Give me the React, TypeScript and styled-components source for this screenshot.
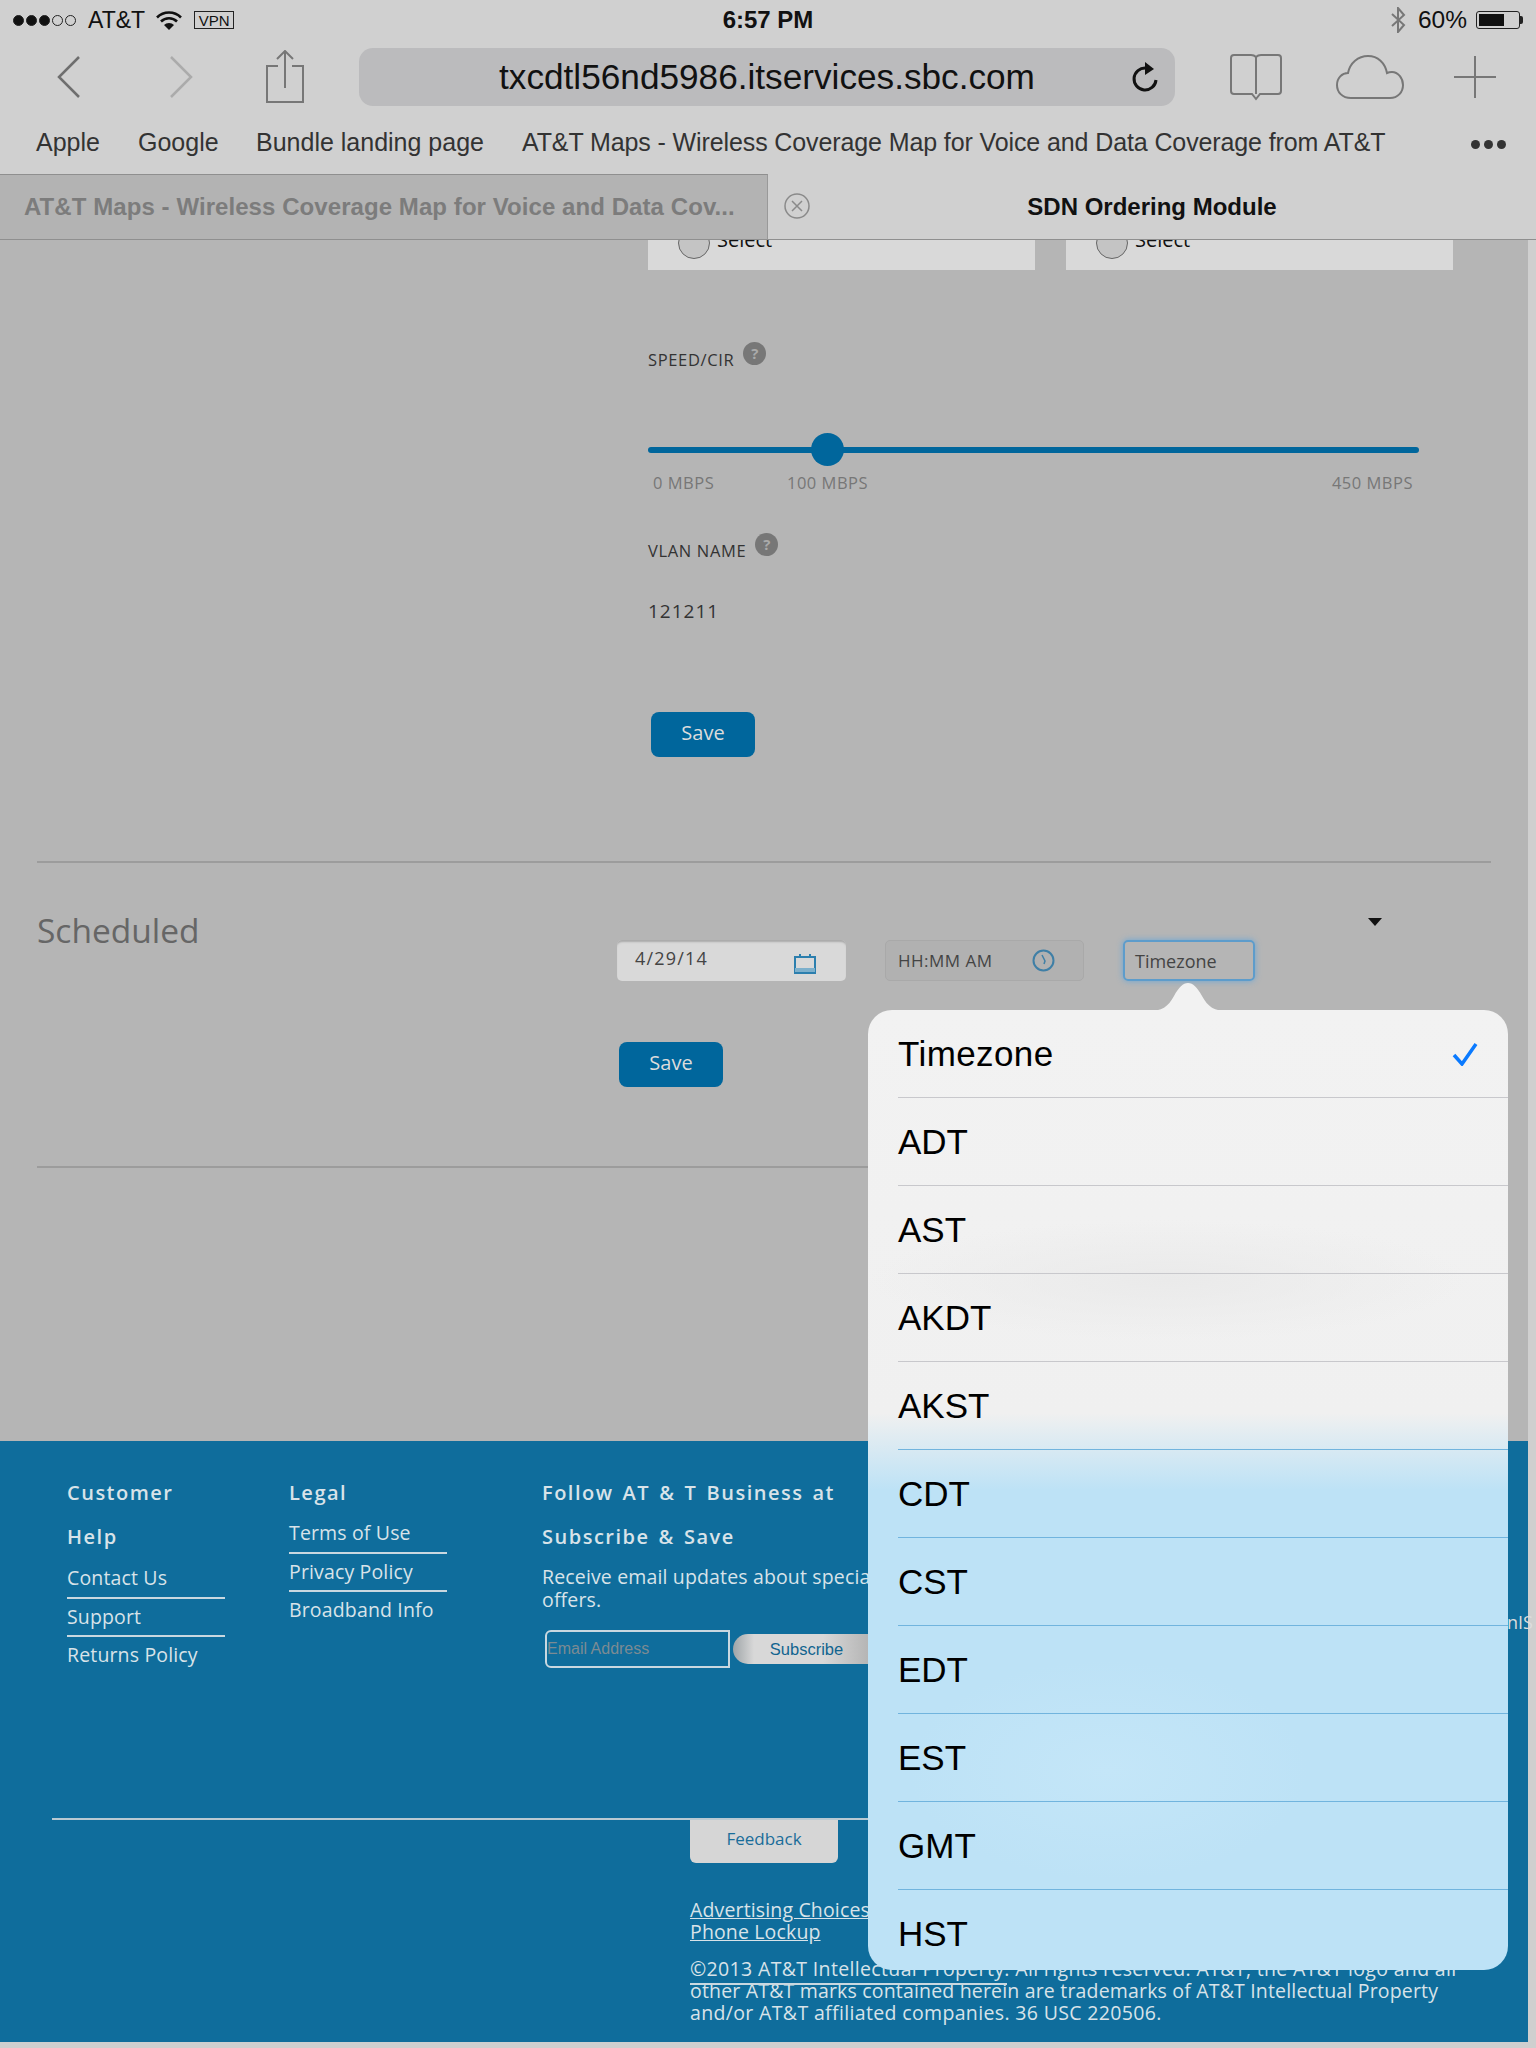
import styled, { createGlobalStyle } from 'styled-components';

const pageFont = `'Open Sans', 'Noto Sans', sans-serif`;
const iosFont = `'Liberation Sans', Arial, sans-serif`;

const GlobalStyle = createGlobalStyle`
    html, body {
        margin: 0;
        padding: 0;
        background: #cfcfcf;
        overflow: hidden;
    }
    * {
        box-sizing: border-box;
    }
`;

const Page = styled.div`
    position: relative;
    width: 1536px;
    height: 2048px;
    overflow: hidden;
    font-family: ${pageFont};
`;

/* browser chrome */
const Chrome = styled.div`
    height: 240px;
    background: #d0d0d0;
    font-family: ${iosFont};
`;

const StatusBar = styled.div`
    position: relative;
    display: flex;
    align-items: center;
    height: 40px;
    padding: 0 16px 0 13px;
    font-size: 23px;
    color: #111;
`;

const Dots = styled.div`
    display: flex;
    gap: 2px;
    width: 75px;
`;

const Dot = styled.span<{ $filled?: boolean }>`
    width: 11px;
    height: 11px;
    border-radius: 50%;
    border: 1px solid #222;
    background: ${(p) => (p.$filled ? '#111' : 'transparent')};
`;

const Vpn = styled.span`
    margin-left: 11px;
    width: 40px;
    height: 18px;
    border: 1px solid #222;
    font-size: 15px;
    line-height: 17px;
    text-align: center;
`;

const Clock = styled.div`
    position: absolute;
    left: 0;
    right: 0;
    text-align: center;
    font-size: 24px;
    font-weight: bold;
    color: #111;
`;

const StatusRight = styled.div`
    display: flex;
    align-items: center;
    margin-left: auto;
    gap: 12px;
`;

const Percent = styled.span`
    font-size: 24.5px;
`;

const Battery = styled.div`
    position: relative;
    width: 44px;
    height: 18px;
    margin-left: -3px;
    border: 1px solid #222;
    border-radius: 3px;
    padding: 2px;
    &::before {
        content: '';
        display: block;
        width: 25px;
        height: 100%;
        background: #111;
    }
    &::after {
        content: '';
        position: absolute;
        right: -4px;
        top: 4px;
        width: 3px;
        height: 8px;
        background: #222;
        border-radius: 0 2px 2px 0;
    }
`;

const Toolbar = styled.div`
    display: flex;
    align-items: center;
    height: 58px;
    margin-top: 8px;
`;

const ToolIcon = styled.svg<{ $left: number }>`
    flex: none;
    margin-left: ${(p) => p.$left}px;
    fill: none;
`;

const UrlBar = styled.div`
    position: relative;
    display: flex;
    align-items: center;
    justify-content: center;
    width: 816px;
    height: 58px;
    margin-left: 54px;
    border-radius: 14px;
    background: #bbbbbd;
    font-size: 35.2px;
    color: #111;
`;

const Reload = styled.svg`
    position: absolute;
    right: 14px;
    top: 13px;
`;

const Bookmarks = styled.div`
    display: flex;
    align-items: center;
    height: 68px;
    padding: 4px 30px 0 36px;
    font-size: 25px;
    color: #333;
`;

const Bookmark = styled.span<{ $width: number }>`
    width: ${(p) => p.$width}px;
    flex: none;
    white-space: nowrap;
    &:nth-child(4) {
        letter-spacing: -0.11px;
    }
`;

const MoreDots = styled.div`
    display: flex;
    gap: 4px;
    margin-left: auto;
    margin-top: 4px;
    span {
        width: 9px;
        height: 9px;
        border-radius: 50%;
        background: #333;
    }
`;

const Tabs = styled.div`
    display: flex;
    height: 66px;
`;

const InactiveTab = styled.div`
    width: 768px;
    display: flex;
    align-items: center;
    padding-left: 24px;
    background: #b3b3b3;
    border-top: 1px solid #8f8f8f;
    border-bottom: 1px solid #8f8f8f;
    border-right: 1px solid #999;
    font-size: 24px;
    font-weight: bold;
    letter-spacing: 0.07px;
    color: #7c7c7c;
    white-space: nowrap;
`;

const ActiveTab = styled.div`
    position: relative;
    flex: 1;
    display: flex;
    align-items: center;
    justify-content: center;
    border-bottom: 1px solid #8f8f8f;
    font-size: 24px;
    font-weight: bold;
    color: #111;
`;

const TabClose = styled.svg`
    position: absolute;
    left: 16px;
    top: 19px;
`;

/* page content */
const Main = styled.div`
    width: 1528px;
    height: 1201px;
    background: #b5b5b5;
`;

const FormSection = styled.div`
    width: 771px;
    margin-left: 648px;
`;

const Cards = styled.div`
    display: flex;
    gap: 31px;
    width: 805px;
`;

const Card = styled.div`
    display: flex;
    width: 387px;
    height: 30px;
    padding-left: 30px;
    overflow: hidden;
    background: #d9d9d9;
`;

const Radio = styled.span`
    flex: none;
    width: 32px;
    height: 32px;
    margin-top: -13px;
    border-radius: 50%;
    border: 1px solid #666;
    background: #c4c4c4;
`;

const RadioLabel = styled.span`
    margin: -13px 0 0 7px;
    font-size: 20px;
    line-height: 26px;
    color: #111;
`;

const FieldLabel = styled.div<{ $top: number }>`
    display: flex;
    align-items: flex-start;
    gap: 9px;
    height: 28px;
    margin-top: ${(p) => p.$top}px;
    span:first-child {
        margin-top: 8px;
        font-size: 16.5px;
        line-height: 20px;
        letter-spacing: 0.65px;
        color: #333;
    }
`;

const Help = styled.span`
    width: 23px;
    height: 23px;
    border-radius: 50%;
    background: #777;
    color: #aaa;
    font-size: 15px;
    font-weight: bold;
    line-height: 23px;
    text-align: center;
`;

const Slider = styled.div`
    position: relative;
    display: flex;
    align-items: center;
    height: 33px;
    margin-top: 63px;
`;

const Track = styled.div`
    width: 100%;
    height: 6px;
    border-radius: 3px;
    background: #00669c;
`;

const Thumb = styled.div`
    position: absolute;
    left: 163px;
    top: 0;
    width: 33px;
    height: 33px;
    border-radius: 50%;
    background: #00669c;
`;

const Scale = styled.div`
    display: flex;
    margin-top: 7px;
    padding: 0 6px 0 5px;
    font-size: 16.5px;
    line-height: 20px;
    letter-spacing: 0.5px;
    color: #777;
`;

const ScaleItem = styled.span<{ $width?: number }>`
    width: ${(p) => (p.$width ? `${p.$width}px` : 'auto')};
    &:last-child {
        margin-left: auto;
    }
`;

const Value = styled.div`
    margin-top: 38px;
    font-size: 19px;
    line-height: 24px;
    letter-spacing: 1px;
    color: #333;
`;

const SaveButton = styled.button<{ $left: number; $top: number }>`
    display: block;
    width: 104px;
    height: 45px;
    margin: ${(p) => p.$top}px 0 0 ${(p) => p.$left}px;
    padding: 0 0 4px;
    border: none;
    border-radius: 8px;
    background: #00669c;
    color: #dcdcdc;
    font-family: ${pageFont};
    font-size: 20px;
`;

const Divider = styled.hr<{ $top: number }>`
    width: 1454px;
    height: 2px;
    margin: ${(p) => p.$top}px 0 0 37px;
    border: none;
    background: #9c9c9c;
`;

const Scheduled = styled.div`
    display: flex;
    padding-left: 37px;
`;

const ScheduledTitle = styled.h2`
    width: 580px;
    margin: 45px 0 0;
    font-size: 33.5px;
    font-weight: 400;
    line-height: 44px;
    color: #666;
`;

const ScheduleColumn = styled.div`
    padding-top: 55px;
`;

const NativeArrow = styled.div`
    width: 0;
    height: 0;
    margin-left: 751px;
    border-left: 7px solid transparent;
    border-right: 7px solid transparent;
    border-top: 8px solid #111;
`;

const Inputs = styled.div`
    display: flex;
    margin-top: 14px;
`;

const DateInput = styled.div`
    display: flex;
    justify-content: space-between;
    width: 229px;
    height: 41px;
    padding: 6px 30px 0 18px;
    border-radius: 5px;
    background: #d9d9d9;
    box-shadow: inset 0 3px 2px -1px #aaa;
    font-size: 18px;
    letter-spacing: 1.2px;
    color: #444;
`;

const TimeInput = styled.div`
    display: flex;
    justify-content: space-between;
    align-items: center;
    width: 199px;
    height: 41px;
    margin-left: 39px;
    padding: 0 28px 0 12px;
    border: 1px solid #a9a9a9;
    border-radius: 5px;
    background: #b1b1b1;
    font-size: 17px;
    letter-spacing: 0.5px;
    color: #444;
`;

const ZoneInput = styled.div`
    display: flex;
    align-items: center;
    width: 132px;
    height: 41px;
    margin-left: 39px;
    padding-left: 10px;
    border: 2px solid #5d9ccb;
    border-radius: 5px;
    box-shadow: 0 0 6px #6aa6d6;
    font-size: 18px;
    color: #444;
`;

/* footer */
const Footer = styled.footer`
    position: relative;
    width: 1528px;
    height: 601px;
    background: #0f6d9c;
    color: #d8e3e9;
`;

const FooterColumns = styled.div`
    display: flex;
    height: 377px;
    padding: 30px 0 0 67px;
`;

const FooterColumn = styled.div<{ $width: number }>`
    flex: none;
    width: ${(p) => p.$width}px;
`;

const FooterHeading = styled.h3`
    margin: 0;
    font-size: 20px;
    font-weight: 600;
    line-height: 44px;
    letter-spacing: 1.5px;
    word-spacing: 2.4px;
`;

const LinkList = styled.div<{ $top: number }>`
    width: 158px;
    margin-top: ${(p) => p.$top}px;
`;

const FooterLink = styled.div`
    height: 38.5px;
    font-size: 19.5px;
    line-height: 35px;
    letter-spacing: 0.15px;
    white-space: nowrap;
    border-bottom: 2px solid #c9d8e0;
    &:last-child {
        border-bottom: none;
    }
`;

const Receive = styled.p`
    width: 380px;
    margin: 6px 0 0;
    font-size: 19.5px;
    line-height: 23px;
    letter-spacing: 0.15px;
`;

const SubscribeRow = styled.div`
    display: flex;
    margin: 19px 0 0 3px;
`;

const EmailInput = styled.div`
    width: 185px;
    height: 38px;
    border: 2px solid #c9d8e0;
    border-radius: 6px 0 0 6px;
    font-family: ${iosFont};
    font-size: 16px;
    line-height: 34px;
    color: #7c8b93;
`;

const SubscribeButton = styled.button`
    width: 150px;
    height: 30px;
    margin: 4px 0 0 3px;
    padding: 0 3px 0 0;
    border: none;
    border-radius: 15px;
    background: linear-gradient(90deg, #9fa5a8, #d8d8d8 14%, #d8d8d8 60%, #aaa);
    font-family: ${iosFont};
    font-size: 16.5px;
    color: #11648f;
`;

const FooterRule = styled.hr`
    width: 1400px;
    height: 2px;
    margin: 0 0 0 52px;
    border: none;
    background: #b9c9d2;
`;

const FooterBottom = styled.div`
    position: relative;
    margin-left: 690px;
`;

const Feedback = styled.div`
    width: 148px;
    height: 43px;
    border-radius: 0 0 6px 6px;
    background: #d6d6d6;
    color: #1a6d9a;
    font-size: 17px;
    line-height: 38px;
    text-align: center;
`;

const LegalLinks = styled.div`
    margin-top: 36px;
    font-size: 19.5px;
    line-height: 22px;
    letter-spacing: 0.15px;
    text-decoration: underline;
`;

const Copyright = styled.p`
    position: relative;
    margin: 15px 0 0;
    font-size: 19.5px;
    line-height: 22px;
    letter-spacing: 0.35px;
    white-space: nowrap;
`;

const TightLine = styled.span`
    letter-spacing: 0.18px;
`;

const StrayLine = styled.span`
    position: absolute;
    left: 0;
    top: 25px;
    width: 317px;
    height: 2px;
    background: #c9d8e0;
`;

const StrayText = styled.span`
    position: absolute;
    left: 1507px;
    top: 167px;
    font-size: 18px;
    line-height: 28px;
    color: #ddd;
    z-index: 3;
`;

/* timezone popover */
const Popover = styled.div`
    position: absolute;
    left: 868px;
    top: 1010px;
    width: 640px;
    height: 960px;
    z-index: 2;
    font-family: ${iosFont};
`;

const PopoverArrow = styled.svg`
    position: absolute;
    left: 280px;
    top: -27px;
`;

const PopoverPanel = styled.div`
    height: 100%;
    overflow: hidden;
    border-radius: 24px;
    background:
        radial-gradient(ellipse 200px 110px at 240px 760px, #c4e6f8, transparent),
        radial-gradient(ellipse 300px 60px at 300px 270px, #eaeaea, transparent),
        linear-gradient(#f2f2f2 0%, #f0f0f0 42%, #bde2f6 50%, #bde2f6 100%);
`;

const ZoneRow = styled.div<{ $tinted?: boolean }>`
    display: flex;
    align-items: center;
    justify-content: space-between;
    height: 88px;
    margin-left: 30px;
    padding-right: 30px;
    border-bottom: 1px solid ${(p) => (p.$tinted ? '#71b4de' : '#c8c8cc')};
    font-size: 35px;
    color: #000;
`;

const ZoneName = styled.span<{ $wide?: boolean }>`
    letter-spacing: ${(p) => (p.$wide ? '0.4px' : '0')};
`;

const zones = ['ADT', 'AST', 'AKDT', 'AKST', 'CDT', 'CST', 'EDT', 'EST', 'GMT', 'HST'];
const blueFrom = 4;

function App() {
    return (
        <Page>
            <GlobalStyle />
            <Chrome>
                <StatusBar>
                    <Dots>
                        <Dot $filled />
                        <Dot $filled />
                        <Dot $filled />
                        <Dot />
                        <Dot />
                    </Dots>
                    <span>AT&amp;T</span>
                    <svg width="28" height="20" viewBox="0 0 28 20" style={{ marginLeft: 10 }}>
                        <path d="M2 7.5a17 17 0 0 1 24 0" fill="none" stroke="#111" strokeWidth="2.6" />
                        <path d="M6 11.5a11.5 11.5 0 0 1 16 0" fill="none" stroke="#111" strokeWidth="2.6" />
                        <path d="M14 20l-5-5a7 7 0 0 1 10 0z" fill="#111" />
                    </svg>
                    <Vpn>VPN</Vpn>
                    <Clock>6:57 PM</Clock>
                    <StatusRight>
                        <svg width="16" height="26" viewBox="0 0 16 26" fill="none" stroke="#777" strokeWidth="2">
                            <path d="M2 7l12 11-6 7V1l6 7L2 19" />
                        </svg>
                        <Percent>60%</Percent>
                        <Battery />
                    </StatusRight>
                </StatusBar>
                <Toolbar>
                    <ToolIcon $left={57} width="24" height="42" viewBox="0 0 24 42" stroke="#6e6e6e" strokeWidth="2.5">
                        <path d="M22 1L2 21l20 20" />
                    </ToolIcon>
                    <ToolIcon $left={88} width="24" height="42" viewBox="0 0 24 42" stroke="#ababab" strokeWidth="2.5">
                        <path d="M2 1l20 20L2 41" />
                    </ToolIcon>
                    <ToolIcon $left={72} width="40" height="54" viewBox="0 0 40 54" stroke="#777" strokeWidth="2">
                        <path d="M13 16H2v36h36V16H27M20 38V2M12 9l8-8 8 8" />
                    </ToolIcon>
                    <UrlBar>
                        txcdtl56nd5986.itservices.sbc.com
                        <Reload width="32" height="34" viewBox="0 0 32 34" fill="none">
                            <path d="M17 7A11 11 0 1 0 27 19" stroke="#111" strokeWidth="3" />
                            <path d="M16 1l9 7-9 6z" fill="#111" />
                        </Reload>
                    </UrlBar>
                    <ToolIcon $left={55} width="52" height="48" viewBox="0 0 52 48" stroke="#777" strokeWidth="2">
                        <path d="M26 4c-1-1-3-2-5-2H4a3 3 0 0 0-3 3v33a3 3 0 0 0 3 3h18l4 5 4-5h18a3 3 0 0 0 3-3V5a3 3 0 0 0-3-3H31c-2 0-4 1-5 2v37" />
                    </ToolIcon>
                    <ToolIcon $left={54} width="68" height="44" viewBox="0 0 68 44" stroke="#777" strokeWidth="2">
                        <path d="M15 43C6 43 1 37 1 30c0-7 5-12 11-12 2-10 10-17 20-17 10 0 17 7 19 17 2-1 3-1 5-1 6 0 11 6 11 13 0 7-5 13-13 13z" />
                    </ToolIcon>
                    <ToolIcon $left={49} width="44" height="44" viewBox="0 0 44 44" stroke="#777" strokeWidth="2">
                        <path d="M22 1v42M1 22h42" />
                    </ToolIcon>
                </Toolbar>
                <Bookmarks>
                    <Bookmark $width={102}>Apple</Bookmark>
                    <Bookmark $width={118}>Google</Bookmark>
                    <Bookmark $width={266}>Bundle landing page</Bookmark>
                    <Bookmark $width={860}>AT&amp;T Maps - Wireless Coverage Map for Voice and Data Coverage from AT&amp;T</Bookmark>
                    <MoreDots>
                        <span />
                        <span />
                        <span />
                    </MoreDots>
                </Bookmarks>
                <Tabs>
                    <InactiveTab>AT&amp;T Maps - Wireless Coverage Map for Voice and Data Cov...</InactiveTab>
                    <ActiveTab>
                        <TabClose width="26" height="26" viewBox="0 0 26 26" fill="none" stroke="#8a8a8a" strokeWidth="1.5">
                            <circle cx="13" cy="13" r="12" />
                            <path d="M8 8l10 10M18 8L8 18" />
                        </TabClose>
                        SDN Ordering Module
                    </ActiveTab>
                </Tabs>
            </Chrome>
            <Main>
                <FormSection>
                    <Cards>
                        <Card>
                            <Radio />
                            <RadioLabel>Select</RadioLabel>
                        </Card>
                        <Card>
                            <Radio />
                            <RadioLabel>Select</RadioLabel>
                        </Card>
                    </Cards>
                    <FieldLabel $top={72}>
                        <span>SPEED/CIR</span>
                        <Help>?</Help>
                    </FieldLabel>
                    <Slider>
                        <Track />
                        <Thumb />
                    </Slider>
                    <Scale>
                        <ScaleItem $width={134}>0 MBPS</ScaleItem>
                        <ScaleItem>100 MBPS</ScaleItem>
                        <ScaleItem>450 MBPS</ScaleItem>
                    </Scale>
                    <FieldLabel $top={40}>
                        <span>VLAN NAME</span>
                        <Help>?</Help>
                    </FieldLabel>
                    <Value>121211</Value>
                    <SaveButton $left={3} $top={89}>Save</SaveButton>
                </FormSection>
                <Divider $top={104} />
                <Scheduled>
                    <ScheduledTitle>Scheduled</ScheduledTitle>
                    <ScheduleColumn>
                        <NativeArrow />
                        <Inputs>
                            <DateInput>
                                4/29/14
                                <svg width="22" height="21" viewBox="0 0 22 21" fill="none" style={{ marginTop: 7 }}>
                                    <path d="M1 4h20v16H1z" stroke="#2c7fae" strokeWidth="2" />
                                    <path d="M1 17h20" stroke="#7db0cc" strokeWidth="4" />
                                    <path d="M6 1v4M16 1v4" stroke="#2c7fae" strokeWidth="2" />
                                </svg>
                            </DateInput>
                            <TimeInput>
                                HH:MM AM
                                <svg width="23" height="23" viewBox="0 0 23 23" fill="none" stroke="#3f7fa6" strokeWidth="2">
                                    <circle cx="11.5" cy="11.5" r="10" />
                                    <path d="M10 6l3 6-1 3" strokeWidth="1.5" />
                                </svg>
                            </TimeInput>
                            <ZoneInput>Timezone</ZoneInput>
                        </Inputs>
                        <SaveButton $left={2} $top={61}>Save</SaveButton>
                    </ScheduleColumn>
                </Scheduled>
                <Divider $top={79} />
            </Main>
            <Footer>
                <FooterColumns>
                    <FooterColumn $width={222}>
                        <FooterHeading>Customer</FooterHeading>
                        <FooterHeading>Help</FooterHeading>
                        <LinkList $top={1}>
                            <FooterLink>Contact Us</FooterLink>
                            <FooterLink>Support</FooterLink>
                            <FooterLink>Returns Policy</FooterLink>
                        </LinkList>
                    </FooterColumn>
                    <FooterColumn $width={253}>
                        <FooterHeading>Legal</FooterHeading>
                        <LinkList $top={0}>
                            <FooterLink>Terms of Use</FooterLink>
                            <FooterLink>Privacy Policy</FooterLink>
                            <FooterLink>Broadband Info</FooterLink>
                        </LinkList>
                    </FooterColumn>
                    <FooterColumn $width={420}>
                        <FooterHeading>Follow AT &amp; T Business at</FooterHeading>
                        <FooterHeading>Subscribe &amp; Save</FooterHeading>
                        <Receive>Receive email updates about special offers.</Receive>
                        <SubscribeRow>
                            <EmailInput>Email Address</EmailInput>
                            <SubscribeButton>Subscribe</SubscribeButton>
                        </SubscribeRow>
                    </FooterColumn>
                </FooterColumns>
                <FooterRule />
                <FooterBottom>
                    <Feedback>Feedback</Feedback>
                    <LegalLinks>
                        Advertising Choices
                        <br />
                        Phone Lockup
                    </LegalLinks>
                    <Copyright>
                        ©2013 AT&amp;T Intellectual Property. All rights reserved. AT&amp;T, the AT&amp;T logo and all
                        <br />
                        <TightLine>other AT&amp;T marks contained herein are trademarks of AT&amp;T Intellectual Property</TightLine>
                        <br />
                        and/or AT&amp;T affiliated companies. 36 USC 220506.
                        <StrayLine />
                    </Copyright>
                </FooterBottom>
                <StrayText>nIS</StrayText>
            </Footer>
            <Popover>
                <PopoverArrow width="80" height="28" viewBox="0 0 80 28">
                    <path d="M0 28c14 0 20-4 26-15 5-9 9-13 14-13s9 4 14 13c6 11 12 15 26 15z" fill="#f2f2f2" />
                </PopoverArrow>
                <PopoverPanel>
                    <ZoneRow>
                        <ZoneName $wide>Timezone</ZoneName>
                        <svg width="26" height="24" viewBox="0 0 26 24" fill="none">
                            <path d="M2 13l8 9L24 2" stroke="#0a7aff" strokeWidth="3.5" />
                        </svg>
                    </ZoneRow>
                    {zones.map((zone, i) => (
                        <ZoneRow key={zone} $tinted={i >= blueFrom - 1}>
                            <ZoneName>{zone}</ZoneName>
                        </ZoneRow>
                    ))}
                </PopoverPanel>
            </Popover>
        </Page>
    );
}

export default App;
